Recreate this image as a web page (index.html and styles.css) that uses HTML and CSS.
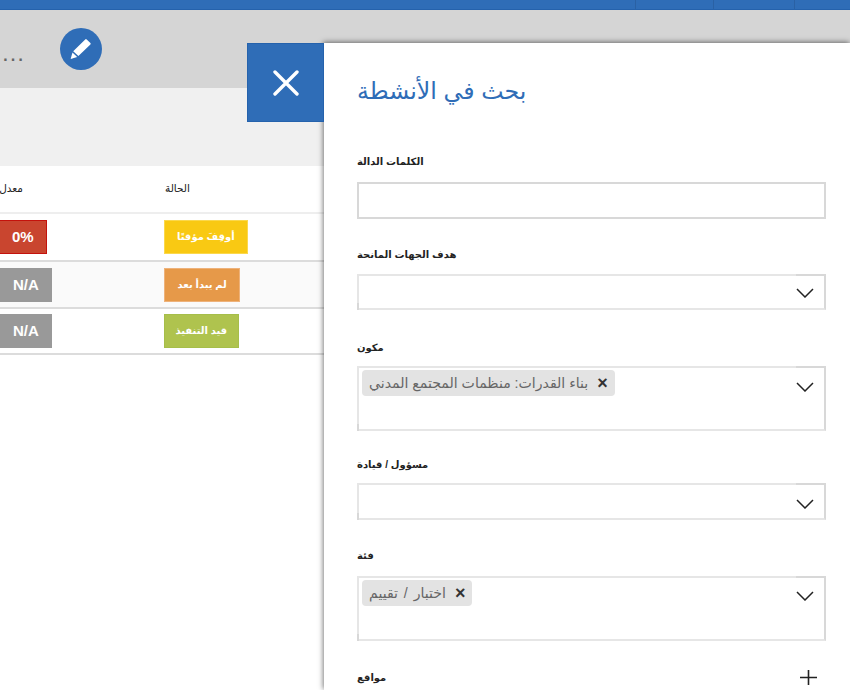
FILE: index.html
```html
<!DOCTYPE html>
<html lang="ar">
<head>
<meta charset="utf-8">
<title>بحث في الأنشطة</title>
<link rel="stylesheet" href="styles.css">
</head>
<body>
<div class="page">
  <div class="topbar">
    <span class="tab tab-a"></span>
    <span class="tab tab-b"></span>
    <span class="tab tab-c"></span>
  </div>
  <div class="titlebar">
    <span class="ellipsis">…</span>
    <a class="edit" href="#" aria-label="تحرير">
      <svg width="42" height="42" viewBox="0 0 42 42"><path fill="#fff" d="M25.2 11.6 a1 1 0 0 1 1.5 -.1 L30.4 15 a1 1 0 0 1 0 1.4 L18.4 28 L13.2 23.2 Z"/><path fill="#fff" d="M12.5 24.4 L17.2 28.9 L10.6 31 Z"/></svg>
    </a>
  </div>
  <div class="toolbar"></div>
  <div class="table">
    <div class="row head">
      <div class="cell rate"><span class="clip">معدل الإنجاز</span></div>
      <div class="cell status">الحالة</div>
    </div>
    <div class="row">
      <div class="cell rate"><span class="pill red">0%</span></div>
      <div class="cell"><span class="pill yellow">أوقِفَ مؤقتًا</span></div>
    </div>
    <div class="row alt">
      <div class="cell rate"><span class="pill gray">N/A</span></div>
      <div class="cell"><span class="pill orange">لم يبدأ بعد</span></div>
    </div>
    <div class="row">
      <div class="cell rate"><span class="pill gray">N/A</span></div>
      <div class="cell"><span class="pill green">قيد التنفيذ</span></div>
    </div>
  </div>
</div>

<aside class="drawer">
  <button class="close" aria-label="إغلاق">
    <svg width="26" height="26" viewBox="0 0 26 26"><path d="M2 2 L24 24 M24 2 L2 24" stroke="#fff" stroke-width="3.4" stroke-linecap="round" fill="none"/></svg>
  </button>
  <h1 class="title">بحث في الأنشطة</h1>
  <div class="field f-keywords">
    <label class="label">الكلمات الدالة</label>
    <div class="box h37"></div>
  </div>
  <div class="field f-donor">
    <label class="label">هدف الجهات المانحة</label>
    <div class="box h36 select"><svg class="chev" width="18" height="10" viewBox="0 0 18 10"><path d="M1 1 L9 9 L17 1" fill="none" stroke="#222" stroke-width="1.5"/></svg></div>
  </div>
  <div class="field f-comp">
    <label class="label">مكون</label>
    <div class="box tall select">
      <span class="chip"><b class="x">×</b><span>بناء القدرات: منظمات المجتمع المدني</span></span>
      <svg class="chev" width="18" height="10" viewBox="0 0 18 10"><path d="M1 1 L9 9 L17 1" fill="none" stroke="#222" stroke-width="1.5"/></svg>
    </div>
  </div>
  <div class="field f-lead">
    <label class="label">مسؤول / قيادة</label>
    <div class="box h37 select"><svg class="chev" width="18" height="10" viewBox="0 0 18 10"><path d="M1 1 L9 9 L17 1" fill="none" stroke="#222" stroke-width="1.5"/></svg></div>
  </div>
  <div class="field f-cat">
    <label class="label">فئة</label>
    <div class="box tall select">
      <span class="chip wide"><b class="x">×</b><span>اختبار / تقييم</span></span>
      <svg class="chev" width="18" height="10" viewBox="0 0 18 10"><path d="M1 1 L9 9 L17 1" fill="none" stroke="#222" stroke-width="1.5"/></svg>
    </div>
  </div>
  <div class="more">
    <span class="label">مواقع</span>
    <svg width="17" height="15" viewBox="0 0 17 15"><path d="M8.5 0 V15 M0 7.5 H17" stroke="#222" stroke-width="1.6" fill="none"/></svg>
  </div>
</aside>
</body>
</html>
```

FILE: styles.css
```css
html, body {
  margin: 0;
  height: 690px;
  overflow: hidden;
  background: #fff;
  font-family: "Liberation Sans", Arial, "DejaVu Sans", sans-serif;
}
.page { display: flex; flex-direction: column; }
.topbar {
  height: 9px;
  background: #2f6db7;
  border-bottom: 1px solid #2562ac;
  display: flex;
}
.tab { border-right: 1px solid #2a61a4; height: 9px; }
.tab-a { width: 635px; }
.tab-b { width: 77px; }
.tab-c { width: 80px; }
.titlebar {
  height: 78px;
  box-sizing: border-box;
  background: #d5d5d5;
  display: flex;
  align-items: flex-start;
  padding-top: 18px;
}
.ellipsis {
  font-size: 24px;
  line-height: 50px;
  width: 60px;
  box-sizing: border-box;
  padding-left: 1px;
  color: #666;
}
.edit {
  width: 42px;
  height: 42px;
  border-radius: 50%;
  background: #2f6db7;
  display: block;
}
.toolbar { height: 78px; background: #f0f0f0; }
.table { font-size: 10.5px; color: #222; }
.row {
  display: flex;
  align-items: center;
  height: 47px;
  box-sizing: border-box;
  border-bottom: 2px solid #dcdcdc;
}
.row.head {
  height: 48px;
  border-bottom-color: #eee;
  align-items: flex-start;
  padding-top: 16px;
  line-height: 13px;
}
.head + .row { height: 48px; }
.row:last-child { height: 46px; }
.row.alt { background: #fafafa; }
.cell { flex: none; width: 164px; }
.status { padding-left: 1px; box-sizing: border-box; }
.clip {
  display: block;
  width: 23px;
  direction: rtl;
  white-space: nowrap;
}
.pill {
  display: block;
  width: fit-content;
  box-sizing: border-box;
  height: 34px;
  line-height: 32px;
  padding: 0 12px;
  color: #fff;
  font-size: 10px;
  font-weight: bold;
  border: 1px solid transparent;
}
.rate .pill { font-size: 15px; padding: 0 12px; }
.red { background: #c9452f; border-color: #c4120c; margin-left: -1px; }
.gray { background: #999; }
.yellow { background: #f9c913; border-color: #fbd84c; }
.orange { background: #e69949; border-color: #eeb27a; padding: 0 12.5px; }
.green { background: #afc34e; border-color: #a6be4a; padding: 0 10.5px; }

.drawer {
  position: absolute;
  top: 43px;
  left: 324px;
  width: 526px;
  height: 647px;
  box-sizing: border-box;
  background: #fff;
  box-shadow: -1px -1px 5px rgba(0, 0, 0, .5);
  padding: 0 24px 0 33px;
}
.close {
  position: absolute;
  left: -77px;
  top: 0;
  width: 77px;
  height: 79px;
  background: #2f6db7;
  border: 1px solid #2562ac;
  padding: 0;
  display: flex;
  align-items: center;
  justify-content: center;
}
.title {
  margin: 31px 0 0;
  font-size: 23.7px;
  line-height: 34px;
  font-weight: normal;
  color: #2f6db7;
}
.label {
  display: block;
  font-size: 10px;
  line-height: 14px;
  font-weight: bold;
  color: #222;
}
.field { display: flex; flex-direction: column; gap: 13px; }
.f-keywords { margin-top: 47px; }
.f-donor { margin-top: 29px; gap: 12px; }
.f-comp { margin-top: 31px; gap: 11px; }
.f-lead { margin-top: 27px; gap: 11px; }
.f-cat { margin-top: 29px; }
.box {
  box-sizing: border-box;
  border: 2px solid #d8d8d8;
  position: relative;
}
.select { border-color: #e6e6e6; border-right-color: #d8d8d8; }
.select::before {
  content: "";
  position: absolute;
  left: -2px;
  bottom: -2px;
  width: 2px;
  height: 7px;
  background: #d8d8d8;
}
.select::after {
  content: "";
  position: absolute;
  right: -2px;
  top: -2px;
  width: 30px;
  height: 2px;
  background: #d8d8d8;
}
.h36 { height: 36px; }
.h37 { height: 37px; }
.tall { height: 65px; padding: 2px 3px; }
.chev { position: absolute; right: 10px; top: 14px; }
.f-donor .chev { top: 12px; }
.f-cat .chev { top: 13px; }
.chip {
  display: inline-flex;
  align-items: center;
  gap: 9px;
  height: 26px;
  box-sizing: border-box;
  padding: 0 7px;
  border-radius: 4px;
  background: #e3e3e3;
  color: #666;
  font-size: 14.1px;
  direction: rtl;
}
.wide { word-spacing: 2px; }
.x {
  font-size: 18px;
  color: #333;
  font-weight: bold;
  line-height: 1;
}
.more {
  margin-top: 29px;
  display: flex;
  justify-content: space-between;
  align-items: center;
  padding-right: 9px;
}
```
